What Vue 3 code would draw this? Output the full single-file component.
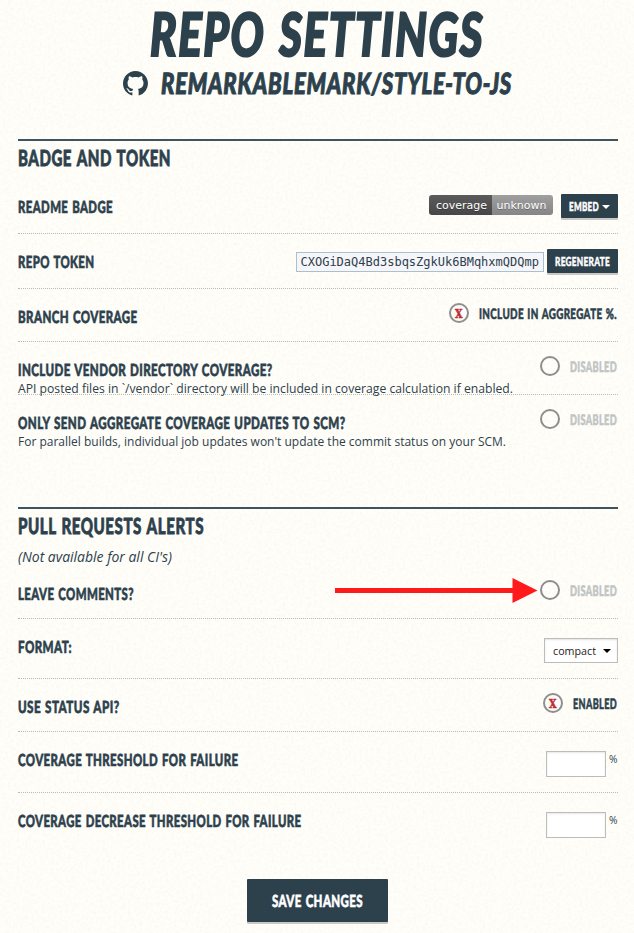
<script setup>
import { h } from 'vue'

// Single-line text fitted to a given width; the box is exactly as tall as the capitals.
const Fit = (props) => {
  const size = props.cap / (props.ratio || 0.72)
  const heavy = !props.ratio
  return h('svg', { width: props.w, height: props.cap, role: 'img', 'aria-label': props.text }, [
    h('text', {
      x: 0,
      y: props.cap,
      'font-size': size,
      'stroke-width': heavy ? size * 0.036 : 0,
      'word-spacing': heavy ? size * 0.07 : 0,
      'letter-spacing': heavy ? size * 0.035 : 0,
      textLength: props.w,
      lengthAdjust: 'spacingAndGlyphs',
    }, props.text),
  ])
}
Fit.props = ['text', 'w', 'cap', 'ratio']

const coverage = [
  { label: 'BRANCH COVERAGE', w: 119.5, on: true, state: 'INCLUDE IN AGGREGATE %.', sw: 138 },
  {
    label: 'INCLUDE VENDOR DIRECTORY COVERAGE?', w: 254.5, state: 'DISABLED', sw: 47,
    note: 'API posted files in `/vendor` directory will be included in coverage calculation if enabled.', nw: 495,
  },
  {
    label: 'ONLY SEND AGGREGATE COVERAGE UPDATES TO SCM?', w: 327.5, state: 'DISABLED', sw: 47, last: true,
    note: "For parallel builds, individual job updates won't update the commit status on your SCM.", nw: 488,
  },
]
const thresholds = [
  { label: 'COVERAGE THRESHOLD FOR FAILURE', w: 220.5 },
  { label: 'COVERAGE DECREASE THRESHOLD FOR FAILURE', w: 283.5, last: true },
]
</script>

<template>
  <main class="page">
    <svg class="paper" width="634" height="933" aria-hidden="true">
      <filter id="grain" x="0" y="0" width="100%" height="100%">
        <feTurbulence type="fractalNoise" baseFrequency="0.35" numOctaves="2" seed="4" />
        <feColorMatrix values="0 0 0 0 .5  0 0 0 0 .5  0 0 0 0 .44  .18 0 0 0 -.072" />
      </filter>
      <rect width="634" height="933" filter="url(#grain)" />
    </svg>

    <header class="head">
      <Fit class="caps italic" text="REPO SETTINGS" :w="334" :cap="43" />
      <div class="repo">
        <svg class="mark" width="25" height="25" viewBox="0 0 16 16">
          <path d="M8 0C3.58 0 0 3.58 0 8c0 3.54 2.29 6.53 5.47 7.59.4.07.55-.17.55-.38 0-.19-.01-.82-.01-1.49-2.01.37-2.53-.49-2.69-.94-.09-.23-.48-.94-.82-1.13-.28-.15-.68-.52-.01-.53.63-.01 1.08.58 1.23.82.72 1.21 1.87.87 2.33.66.07-.52.28-.87.51-1.07-1.78-.2-3.64-.89-3.64-3.95 0-.87.31-1.59.82-2.15-.08-.2-.36-1.02.08-2.12 0 0 .67-.21 2.2.82.64-.18 1.32-.27 2-.27s1.36.09 2 .27c1.53-1.04 2.2-.82 2.2-.82.44 1.1.16 1.92.08 2.12.51.56.82 1.27.82 2.15 0 3.07-1.87 3.75-3.65 3.95.29.25.54.73.54 1.48 0 1.07-.01 1.93-.01 2.2 0 .21.15.46.55.38A8.01 8.01 0 0 0 16 8c0-4.42-3.58-8-8-8z" />
        </svg>
        <Fit class="caps italic" text="REMARKABLEMARK/STYLE-TO-JS" :w="351" :cap="21" />
      </div>
    </header>

    <section class="first">
      <Fit class="caps title" text="BADGE AND TOKEN" :w="153" :cap="16" />
      <div class="row tall lead">
        <Fit class="caps label" text="README BADGE" :w="95" :cap="12" />
        <div class="tools">
          <span class="badge"><span class="left">coverage</span><span class="right">unknown</span></span>
          <button class="btn">
            <Fit class="caps" text="EMBED" :w="30" :cap="9" /><i class="caret"></i>
          </button>
        </div>
      </div>
      <div class="row tall">
        <Fit class="caps label" text="REPO TOKEN" :w="76.5" :cap="12" />
        <div class="tools token-tools">
          <code class="token">CXOGiDaQ4Bd3sbqsZgkUk6BMqhxmQDQmp</code>
          <button class="btn"><Fit class="caps" text="REGENERATE" :w="55" :cap="9" /></button>
        </div>
      </div>
      <div v-for="r in coverage" :key="r.label" class="row" :class="{ last: r.last }">
        <div>
          <Fit class="caps label" :text="r.label" :w="r.w" :cap="12" />
          <Fit v-if="r.note" class="sans note" :text="r.note" :w="r.nw" :cap="8.6" :ratio="0.714" />
        </div>
        <div class="toggle" :class="{ off: !r.on }">
          <span class="ring"><Fit v-if="r.on" class="cross" text="X" :w="7.5" :cap="9" :ratio="0.73" /></span>
          <Fit class="caps state" :text="r.state" :w="r.sw" :cap="10.5" />
        </div>
      </div>
    </section>

    <section class="second">
      <Fit class="caps title" text="PULL REQUESTS ALERTS" :w="186" :cap="16" />
      <Fit class="sans italic-note" text="(Not available for all CI's)" :w="154" :cap="10" :ratio="0.714" />
      <div class="row comments">
        <Fit class="caps label" text="LEAVE COMMENTS?" :w="116" :cap="12" />
        <div class="toggle off">
          <span class="ring"></span>
          <Fit class="caps state" text="DISABLED" :w="47" :cap="10.5" />
        </div>
        <svg class="arrow" width="203" height="25" viewBox="0 0 203 25">
          <path d="M0 10h177.500V0L202.500 12.500 177.500 25V15H0z" />
        </svg>
      </div>
      <div class="row format">
        <Fit class="caps label" text="FORMAT:" :w="54" :cap="12" />
        <div class="select">
          <Fit class="sans" text="compact" :w="43" :cap="8" :ratio="0.714" />
          <i class="caret dark"></i>
        </div>
      </div>
      <div class="row">
        <Fit class="caps label" text="USE STATUS API?" :w="101.5" :cap="12" />
        <div class="toggle">
          <span class="ring"><Fit class="cross" text="X" :w="7.5" :cap="9" :ratio="0.73" /></span>
          <Fit class="caps state" text="ENABLED" :w="44" :cap="10.5" />
        </div>
      </div>
      <div v-for="t in thresholds" :key="t.label" class="row threshold" :class="{ last: t.last }">
        <Fit class="caps label" :text="t.label" :w="t.w" :cap="12" />
        <div class="amount">
          <input class="field" aria-label="percent" />
          <Fit class="sans percent" text="%" :w="8.5" :cap="7.5" :ratio="0.714" />
        </div>
      </div>
    </section>

    <button class="btn save"><Fit class="caps" text="SAVE CHANGES" :w="91" :cap="12" /></button>
  </main>
</template>

<style>
body {
  background: #fffef9;
}
</style>

<style scoped>
.page {
  position: relative;
  box-sizing: border-box;
  width: 634px;
  height: 933px;
  padding: 13px 16px 0 18px;
  overflow: hidden;
  display: flex;
  flex-direction: column;
  color: #2d414d;
}
.paper {
  position: absolute;
  inset: 0;
  z-index: -1;
}
svg {
  display: block;
  flex: none;
  overflow: visible;
  fill: currentColor;
}
.caps {
  font-family: Lato, "Liberation Sans", sans-serif;
  font-weight: 900;
  stroke: currentColor;
  text-rendering: geometricPrecision;
}
.sans {
  font-family: "Open Sans", "Noto Sans", sans-serif;
}
.italic {
  font-style: italic;
}
.head {
  height: 126px;
  margin-right: 2px;
  display: flex;
  flex-direction: column;
  align-items: center;
}
.repo {
  display: flex;
  gap: 13px;
  margin-top: 15px;
}
.repo .caps {
  margin-top: 2px;
}
section {
  border-top: 2px solid #3e5463;
  box-sizing: border-box;
}
.first {
  height: 368px;
}
.second {
  height: 372px;
}
.title {
  margin-top: 9px;
}
.lead {
  margin-top: 13px;
}
.row {
  position: relative;
  box-sizing: border-box;
  height: 53px;
  display: flex;
  justify-content: space-between;
  align-items: flex-start;
  border-bottom: 1px dotted #b9bbb8;
}
.row.tall {
  height: 55px;
}
.row.format {
  height: 60px;
}
.row.threshold {
  height: 61px;
}
.row.last {
  border-bottom: 0;
}
.label {
  margin-top: 22px;
}
.note {
  margin-top: 8.4px;
}
.note,
.italic-note {
  margin-left: -0.5px;
}
.italic-note {
  font-style: italic;
  margin-top: 18px;
}
.comments {
  margin-top: 4px;
}
.tools {
  display: flex;
  gap: 8px;
  padding-top: 15px;
}
.token-tools {
  gap: 3px;
}
.btn {
  box-sizing: border-box;
  height: 24px;
  padding: 0 8px;
  border: 0;
  border-radius: 1px;
  background: #2d414d;
  box-shadow: 0 2px 0 #c9c8c4;
  color: #fff;
  display: flex;
  align-items: center;
  justify-content: center;
  gap: 3px;
}
.caret {
  border: 4px solid transparent;
  border-top-color: currentColor;
  border-bottom: 0;
}
.btn .caret {
  margin-top: 2px;
}
.badge {
  display: flex;
  height: 20px;
  margin-top: 1px;
  border-radius: 3px;
  overflow: hidden;
  font: 11px/21px "DejaVu Sans", sans-serif;
  color: #fff;
  text-align: center;
  text-shadow: 0 1px 0 rgba(1, 1, 1, 0.3);
}
.left {
  box-sizing: border-box;
  width: 63px;
  padding-left: 2px;
  background: linear-gradient(#5b5b5b, #474747);
}
.right {
  box-sizing: border-box;
  width: 61px;
  padding-right: 2px;
  background: linear-gradient(#9f9f9f, #858585);
}
.token {
  box-sizing: border-box;
  width: 248px;
  height: 20px;
  margin-top: 3px;
  border: 1px solid #a9c0cf;
  background: #f6f6fa;
  padding-left: 3.5px;
  font: 12px/18px "DejaVu Sans Mono", monospace;
  white-space: nowrap;
}
.toggle {
  display: flex;
  gap: 10px;
  padding: 14px 1px 0 0;
}
.ring {
  box-sizing: border-box;
  width: 20px;
  height: 20px;
  border: 2px solid #8e8e8e;
  border-radius: 50%;
  display: flex;
  align-items: center;
  justify-content: center;
}
.cross {
  color: #bd2d32;
  stroke: currentColor;
  font-family: "DejaVu Serif", serif;
  font-weight: 700;
  text-rendering: geometricPrecision;
}
.cross :deep(text) {
  stroke-width: 0.5px;
}
.state {
  margin-top: 5px;
}
.off .state {
  color: #c0c5c4;
}
.arrow {
  position: absolute;
  left: 317px;
  top: 12px;
  color: #ff1a1c;
}
.select {
  box-sizing: border-box;
  width: 74px;
  height: 25px;
  margin-top: 19px;
  padding: 0 6px 0 8px;
  border: 1px solid #bcbcbc;
  background: #fff;
  box-shadow: inset 0 1px 2px #e2e2e2;
  color: #222;
  display: flex;
  align-items: center;
  justify-content: space-between;
}
.dark {
  color: #000;
}
.amount {
  display: flex;
  gap: 2.5px;
  padding: 19px 1px 0 0;
}
.field {
  box-sizing: border-box;
  width: 60px;
  height: 26px;
  border: 1px solid #bcbcbc;
  background: #fff;
  box-shadow: inset 0 1px 2px #e8e8e8;
}
.percent {
  margin-top: 3.5px;
}
.save {
  align-self: center;
  margin-right: 2px;
  width: 141px;
  height: 43px;
}
</style>
